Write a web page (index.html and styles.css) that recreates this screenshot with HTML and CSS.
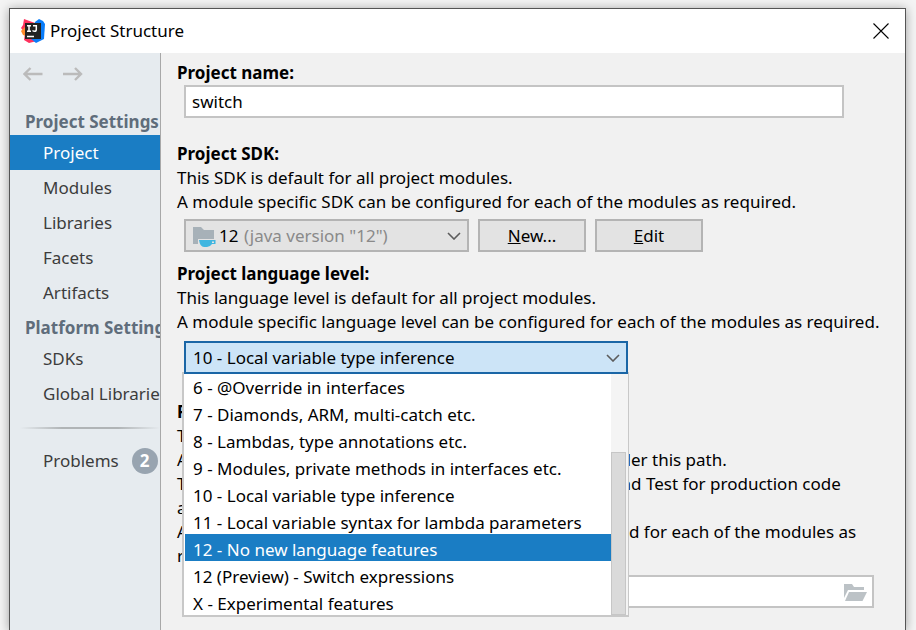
FILE: index.html
```html
<!DOCTYPE html>
<html lang="en">
<head>
<meta charset="utf-8">
<title>Project Structure</title>
<link rel="stylesheet" href="styles.css">
</head>
<body>
<div class="window">
  <header class="titlebar">
    <svg class="logo" width="24" height="24" viewBox="0 0 24 24" aria-hidden="true">
      <path fill="#fe315d" d="M3 0 14 4 9 12 20 21 8 24 3 21 4 14 0 9 2 6Z"/>
      <path fill="#ff8a2a" d="M0 12 4 8 5 17 2 16Z"/>
      <path fill="#087cfa" d="M14 3 18 0 22 2 24 5 23 20 15 24 10 20Z"/>
      <path fill="#222" d="M4 4H20V20H4Z"/>
      <path fill="none" stroke="#fff" stroke-width="1.5" d="M6 6.700H10M8 6.700V12.300M6 12.300H10M12 6.700H15.300V10.500Q15.300 12.300 13.600 12.300 12.500 12.300 11.500 11.500M6 17.500H13"/>
    </svg>
    <h1 class="title">Project Structure</h1>
    <button class="close" type="button" aria-label="Close">
      <svg width="16" height="16" viewBox="0 0 16 16"><path fill="none" stroke="#000" stroke-width="1.1" d="M.5.5 15.500 15.500M15.500.5.5 15.500"/></svg>
    </button>
  </header>
  <div class="body">
    <nav class="sidebar">
      <div class="history">
        <button type="button" aria-label="Back"><svg width="20" height="14" viewBox="0 0 20 14"><path d="M19.500 7H2M7.500 1 1.500 7 7.500 13"/></svg></button>
        <button type="button" aria-label="Forward"><svg width="20" height="14" viewBox="0 0 20 14"><path d="M0 7H18M12 1 18 7 12 13"/></svg></button>
      </div>
      <h2 class="group">Project Settings</h2>
      <a class="item selected" href="#project">Project</a>
      <a class="item" href="#modules">Modules</a>
      <a class="item" href="#libraries">Libraries</a>
      <a class="item" href="#facets">Facets</a>
      <a class="item" href="#artifacts">Artifacts</a>
      <h2 class="group">Platform Settings</h2>
      <a class="item" href="#sdks">SDKs</a>
      <a class="item" href="#global">Global Libraries</a>
      <hr class="divider">
      <a class="item" href="#problems">Problems<span class="badge">2</span></a>
    </nav>
    <main class="content">
      <section class="section">
        <label class="label" for="name">Project name:</label>
        <input class="field name" id="name" type="text" value="switch">
      </section>
      <section class="section sdk">
        <label class="label" for="sdk">Project SDK:</label>
        <p>This SDK is default for all project modules.</p>
        <p>A module specific SDK can be configured for each of the modules as required.</p>
        <div class="row">
          <div class="combo">
            <select class="field" id="sdk"><option>12</option></select>
            <svg class="folder" width="24" height="22" viewBox="0 0 24 22" aria-hidden="true">
              <path fill="#a7b1b8" d="M0 1H8L11 4H21V13H5V18H0Z"/>
              <path fill="#40b6e0" fill-rule="evenodd" d="M6 14H22.500V18H19Q17 21 14 21H11Q7 21 6 14ZM19 15.500V17H21V15.500Z"/>
            </svg>
            <span class="version">(java version "12")</span>
            <svg class="chevron" width="14" height="8" viewBox="0 0 14 8"><path d="M1 1 7 7 13 1"/></svg>
          </div>
          <button class="button" type="button"><u>N</u>ew...</button>
          <button class="button" type="button"><u>E</u>dit</button>
        </div>
      </section>
      <section class="section level">
        <label class="label" for="level">Project language level:</label>
        <p>This language level is default for all project modules.</p>
        <p>A module specific language level can be configured for each of the modules as required.</p>
        <div class="combo open">
          <select class="field" id="level"><option>10 - Local variable type inference</option></select>
          <svg class="chevron" width="14" height="8" viewBox="0 0 14 8"><path d="M1 1 7 7 13 1"/></svg>
          <div class="popup">
            <ul class="options" role="listbox" aria-label="Language levels">
              <li role="option">6 - @Override in interfaces</li>
              <li role="option">7 - Diamonds, ARM, multi-catch etc.</li>
              <li role="option">8 - Lambdas, type annotations etc.</li>
              <li role="option">9 - Modules, private methods in interfaces etc.</li>
              <li role="option">10 - Local variable type inference</li>
              <li role="option">11 - Local variable syntax for lambda parameters</li>
              <li role="option" class="active" aria-selected="true">12 - No new language features</li>
              <li role="option">12 (Preview) - Switch expressions</li>
              <li role="option">X - Experimental features</li>
            </ul>
            <div class="track"><div class="thumb"></div></div>
          </div>
        </div>
      </section>
      <section class="section output">
        <label class="label" for="output">Project compiler output:</label>
        <p>This path is used to store all project compilation results.</p>
        <p>A directory corresponding to each module is created under this path.</p>
        <p>This directory contains two subdirectories: Production and Test for production code<br>and test sources, respectively.</p>
        <p>A module specific compiler output path can be configured for each of the modules as<br>required.</p>
        <div class="path">
          <input class="field" id="output" type="text">
          <svg class="browse" width="24" height="18" viewBox="0 0 24 18" aria-hidden="true">
            <path fill="#bcc2c6" d="M0 0H8L10 3H20V6H4L0 14Z"/>
            <path fill="#bcc2c6" d="M5 8H23L18.500 17H1Z"/>
          </svg>
        </div>
      </section>
    </main>
  </div>
</div>
</body>
</html>
```
FILE: styles.css
```css
* { box-sizing: border-box; }

body {
  margin: 0;
  height: 100vh;
  padding: 8px 10px 0 9px;
  overflow: hidden;
  background: #f4f4f4;
  color: #000;
  font: 17px/24px "Noto Sans", "Open Sans", sans-serif;
}

.window {
  display: flex;
  flex-direction: column;
  min-height: 100%;
  border: 1px solid #555;
  border-bottom: 0;
  background: #f1f1f1;
  box-shadow: 0 1px 10px rgba(0, 0, 0, .35);
}

.titlebar {
  display: flex;
  align-items: center;
  height: 44px;
  padding: 0 16px 0 11px;
  background: #fff;
}

.title {
  flex: 1;
  margin: 0 0 0 5px;
  font-size: 17px;
  font-weight: 400;
}

button {
  padding: 0;
  border: 0;
  background: none;
  color: inherit;
  font: inherit;
}

.close { display: flex; }

.body {
  display: flex;
  flex: 1;
}

.sidebar {
  flex: none;
  width: 151px;
  overflow: hidden;
  border-right: 1px solid #a8a8a8;
  background: #e6ebef;
  color: #3c3c3c;
  white-space: nowrap;
}

.history {
  display: flex;
  gap: 20px;
  padding: 14px 13px 23px;
}

.history button { display: flex; }

.history path {
  fill: none;
  stroke: #bbb;
  stroke-width: 2.4;
}

.group {
  margin: 0;
  padding: 4px 0 0 15px;
  color: #5f6d7b;
  font-size: 17px;
  font-weight: 700;
  line-height: 27px;
}

.item {
  display: flex;
  align-items: center;
  height: 35px;
  padding-left: 33px;
  color: inherit;
  text-decoration: none;
}

.selected {
  background: #1a7dc4;
  color: #fff;
}

.divider {
  height: 2px;
  margin: 16px 0 14px 10px;
  border: 0;
  background: linear-gradient(90deg, transparent, #b0b4b6 30%, #b0b4b6 70%, transparent);
}

.badge {
  flex: none;
  width: 26px;
  margin-left: 13px;
  border-radius: 13px;
  background: #98a4b0;
  color: #fff;
  font-weight: 700;
  line-height: 26px;
  text-align: center;
}

.content {
  flex: 1;
  min-width: 0;
  padding: 8px 31px 0 16px;
  white-space: nowrap;
}

.label {
  display: block;
  font-weight: 700;
}

p { margin: 0; }

.sdk { margin-top: 24px; }
.level { margin-top: 10px; }
.output { margin-top: 26px; }

.field {
  display: block;
  width: 100%;
  height: 33px;
  padding: 0 7px;
  border: 2px solid #c4c4c4;
  border-radius: 0;
  outline: 0;
  appearance: none;
  background: #fff;
  color: #000;
  font: inherit;
}

.name {
  width: calc(100% - 37px);
  margin-left: 7px;
  padding: 0 6px;
}

.row {
  display: flex;
  gap: 9px;
  margin: 5px 0 0 7px;
}

.combo { position: relative; }

.row .combo { width: 285px; }

.row .field {
  padding-left: 33px;
  border-color: #b4b4b4;
  background: #e3e3e3;
}

.chevron {
  position: absolute;
  z-index: 2;
  top: 13px;
  right: 8px;
  fill: none;
  stroke: #5c5c5c;
  stroke-width: 1.6;
  pointer-events: none;
}

.folder {
  position: absolute;
  top: 7px;
  left: 9px;
  pointer-events: none;
}

.version {
  position: absolute;
  top: 5px;
  left: 60px;
  color: #8a8a8a;
  pointer-events: none;
}

.button {
  width: 108px;
  height: 33px;
  border: 2px solid #b4b4b4;
  background: #e3e3e3;
}

.open {
  z-index: 1;
  width: 444px;
  margin: 7px 0 0 7px;
}

.open .field {
  position: relative;
  z-index: 1;
  border-color: #1a66a6;
  background: #cce4f7;
}

.popup {
  position: absolute;
  top: calc(100% - 2px);
  left: -2px;
  right: -1px;
  display: flex;
  border: 2px solid #c8c8c8;
  border-width: 0 1px 2px 2px;
  background: #fff;
}

.options {
  flex: 1;
  margin: 0;
  padding: 0 0 0 1px;
  list-style: none;
}

.options li {
  height: 27px;
  padding-left: 8px;
  line-height: 31px;
}

.options .active {
  background: #1a7dc4;
  color: #fff;
}

.track {
  display: flex;
  flex-direction: column;
  justify-content: flex-end;
  width: 17px;
  padding-right: 2px;
  background: #f4f4f4;
}

.thumb {
  height: 67%;
  border: 1px solid #c6c6c6;
  background: #dadada;
}

.path {
  position: relative;
  margin: 7px 0 0 7px;
}

.browse {
  position: absolute;
  top: 9px;
  right: 6px;
}
```
